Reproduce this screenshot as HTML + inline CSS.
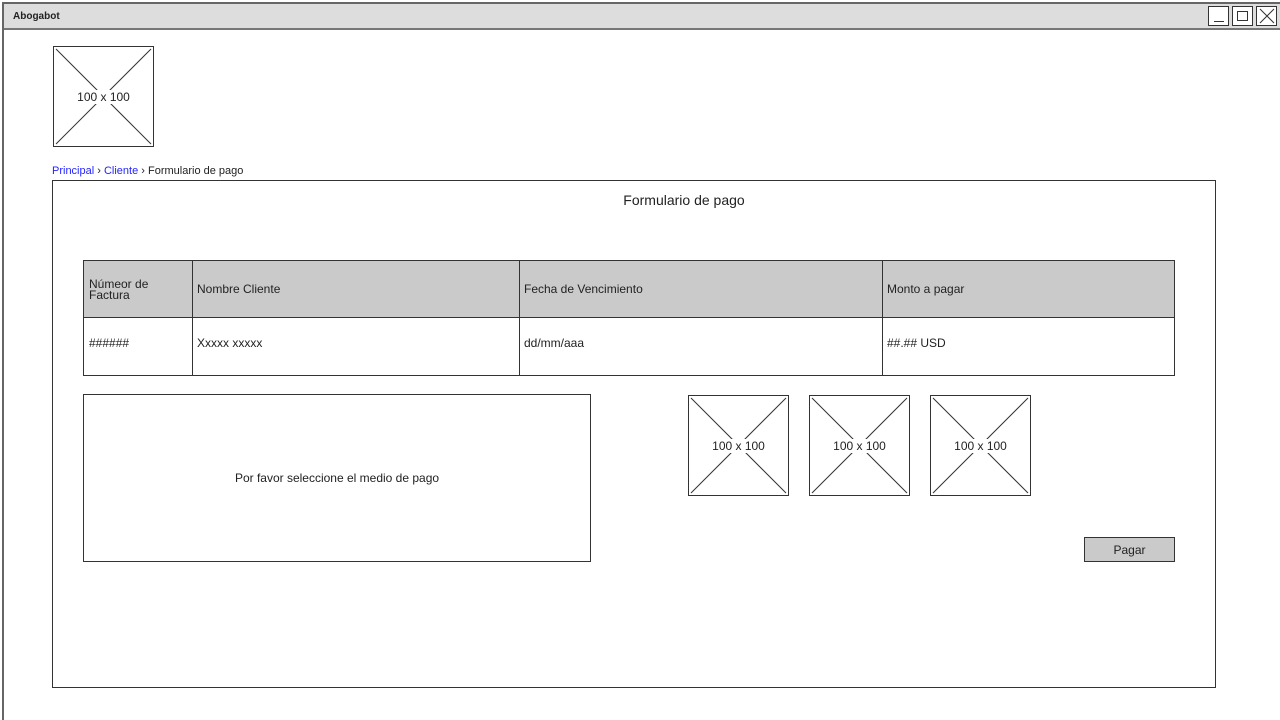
<!DOCTYPE html>
<html style="width:1280px;height:720px;overflow:hidden"><head><meta charset="utf-8"><style>
*{margin:0;padding:0;box-sizing:border-box}
body{width:1280px;height:720px;background:#fff;position:relative;overflow:hidden;font-family:"Liberation Sans",sans-serif;color:#222}
.a{position:absolute}
.ph{position:absolute;border:1px solid #333;background:#fff}
.ph svg{position:absolute;left:0;top:0}
.ph span{position:absolute;left:0;right:0;top:50%;transform:translateY(-50%);text-align:center;font-size:12px;background:transparent}
.cell{position:absolute;font-size:12px;display:flex;align-items:center;padding-left:5px;line-height:11px}
</style></head><body>
<div class="a" style="left:2px;top:2px;width:1278px;height:718px;border:2px solid #666;border-bottom:none;border-right:none"></div>
<div class="a" style="left:4px;top:4px;width:1276px;height:26px;background:#ddd;border-bottom:2px solid #777"></div>
<div class="a" style="left:13px;top:11px;font-size:10px;font-weight:bold">Abogabot</div>
<div class="a" style="left:1208px;top:6px;width:21px;height:20px;border:1px solid #333;background:#fff"><div class="a" style="left:5px;top:14px;width:10px;height:1px;background:#333"></div></div>
<div class="a" style="left:1232px;top:6px;width:21px;height:20px;border:1px solid #333;background:#fff"><div class="a" style="left:4px;top:4px;width:11px;height:10px;border:1px solid #333"></div></div>
<div class="a" style="left:1256px;top:6px;width:21px;height:20px;border:1px solid #333;background:#fff"><svg width="19" height="18" style="position:absolute;left:0;top:0"><path d="M3 2L17 16M17 2L3 16" stroke="#333" stroke-width="1"/></svg></div>

<div class="ph" style="left:53px;top:46px;width:101px;height:101px"><svg width="99" height="99"><path d="M2 2L97 97M97 2L2 97" stroke="#333"/></svg><span style="background:#fff;display:inline-block;left:22px;right:22px">100 x 100</span></div>

<div class="a" style="left:52px;top:165px;font-size:11px"><span style="color:#2323ff">Principal</span> › <span style="color:#2323ff">Cliente</span> › Formulario de pago</div>

<div class="a" style="left:52px;top:180px;width:1164px;height:508px;border:1px solid #333"></div>
<div class="a" style="left:0;width:1368px;top:192px;text-align:center;font-size:14px">Formulario de pago</div>

<div class="a" style="left:83px;top:260px;width:1092px;height:116px;border:1px solid #333"></div>
<div class="a" style="left:84px;top:261px;width:1090px;height:57px;background:#cacaca;border-bottom:1px solid #333"></div>
<div class="a" style="left:192px;top:261px;width:1px;height:115px;background:#333"></div>
<div class="a" style="left:519px;top:261px;width:1px;height:115px;background:#333"></div>
<div class="a" style="left:882px;top:261px;width:1px;height:115px;background:#333"></div>
<div class="cell" style="left:84px;top:261px;height:57px">Númeor de<br>Factura</div>
<div class="cell" style="left:192px;top:261px;height:57px">Nombre Cliente</div>
<div class="cell" style="left:519px;top:261px;height:57px">Fecha de Vencimiento</div>
<div class="cell" style="left:882px;top:261px;height:57px">Monto a pagar</div>
<div class="cell" style="left:84px;top:318px;height:50px">######</div>
<div class="cell" style="left:192px;top:318px;height:50px">Xxxxx xxxxx</div>
<div class="cell" style="left:519px;top:318px;height:50px">dd/mm/aaa</div>
<div class="cell" style="left:882px;top:318px;height:50px">##.## USD</div>

<div class="a" style="left:83px;top:394px;width:508px;height:168px;border:1px solid #333;font-size:12px;display:flex;align-items:center;justify-content:center">Por favor seleccione el medio de pago</div>

<div class="ph" style="left:688px;top:395px;width:101px;height:101px"><svg width="99" height="99"><path d="M2 2L97 97M97 2L2 97" stroke="#333"/></svg><span style="background:#fff;left:22px;right:22px">100 x 100</span></div>
<div class="ph" style="left:809px;top:395px;width:101px;height:101px"><svg width="99" height="99"><path d="M2 2L97 97M97 2L2 97" stroke="#333"/></svg><span style="background:#fff;left:22px;right:22px">100 x 100</span></div>
<div class="ph" style="left:930px;top:395px;width:101px;height:101px"><svg width="99" height="99"><path d="M2 2L97 97M97 2L2 97" stroke="#333"/></svg><span style="background:#fff;left:22px;right:22px">100 x 100</span></div>

<div class="a" style="left:1084px;top:537px;width:91px;height:25px;border:1px solid #333;background:#cacaca;font-size:12px;display:flex;align-items:center;justify-content:center">Pagar</div>
</body></html>
